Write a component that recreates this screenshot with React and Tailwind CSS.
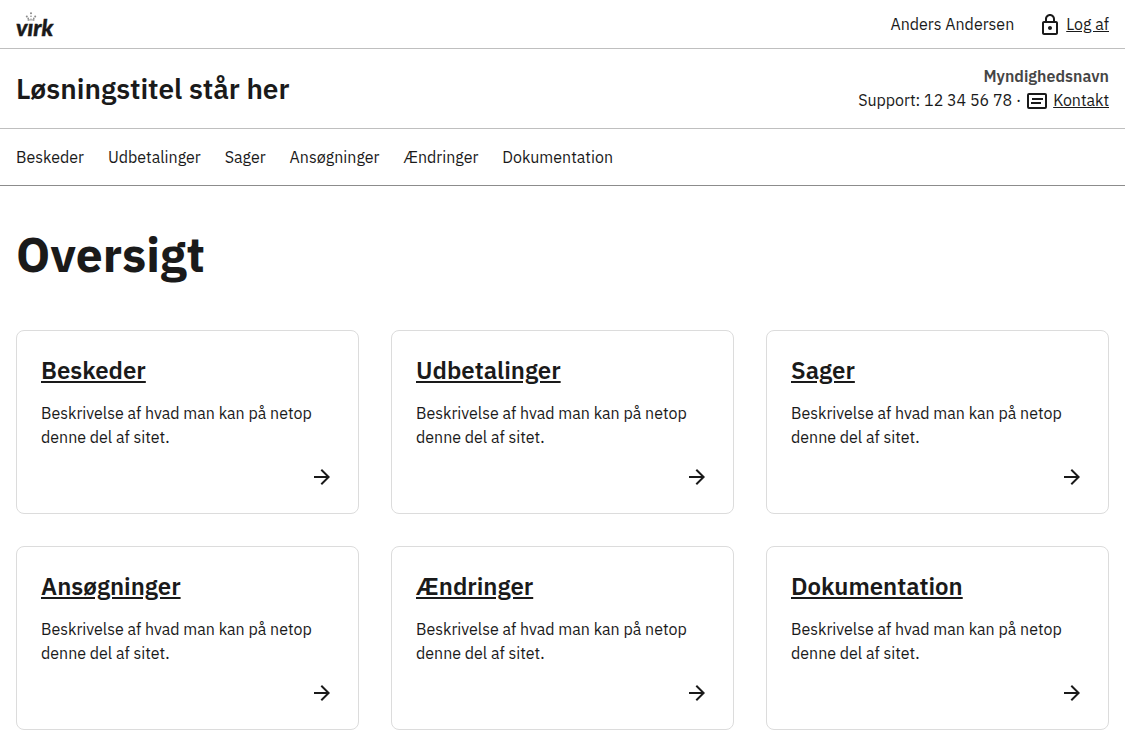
const sections = ["Beskeder", "Udbetalinger", "Sager", "Ansøgninger", "Ændringer", "Dokumentation"];

function LockIcon() {
  return (
    <svg className="size-6 shrink-0" viewBox="0 -1 24 24" fill="currentColor" aria-hidden="true">
      <path d="M18 8h-1V6c0-2.76-2.24-5-5-5S7 3.24 7 6v2H6c-1.1 0-2 .9-2 2v10c0 1.1.9 2 2 2h12c1.1 0 2-.9 2-2V10c0-1.1-.9-2-2-2zM9 6c0-1.66 1.34-3 3-3s3 1.34 3 3v2H9V6zm9 14H6V10h12v10zm-6-3c1.1 0 2-.9 2-2s-.9-2-2-2-2 .9-2 2 .9 2 2 2z" />
    </svg>
  );
}

function ContactIcon() {
  return (
    <svg className="size-6 shrink-0" viewBox="0 -1 24 24" fill="none" stroke="currentColor" strokeWidth="2" aria-hidden="true">
      <rect x="3" y="5" width="18" height="14" rx="1" />
      <path d="M7 10h11M6 14h10" />
    </svg>
  );
}

function ArrowIcon() {
  return (
    <svg className="size-6" viewBox="0 0 24 24" fill="currentColor" aria-hidden="true">
      <path d="M12 4l-1.41 1.41L16.17 11H4v2h12.17l-5.58 5.59L12 20l8-8z" />
    </svg>
  );
}

function Logo() {
  return (
    <svg className="h-8 w-12 overflow-visible" viewBox="0 0 48 32" role="img" aria-label="virk">
      <text
        x="0"
        y="27.6"
        fill="#1a1a1a"
        stroke="#1a1a1a"
        strokeWidth="0.4"
        fontFamily="Lato, sans-serif"
        fontSize="23"
        fontWeight="900"
        fontStyle="italic"
      >
        vırk
      </text>
      <g fill="#8a8a8a">
        <circle cx="15" cy="5.3" r="1" />
        <circle cx="15" cy="8.2" r="0.8" />
        <circle cx="10.8" cy="8.5" r="1" />
        <circle cx="19.2" cy="8.5" r="1" />
        <circle cx="12.2" cy="10.4" r="0.8" />
        <circle cx="17.8" cy="10.4" r="0.8" />
        <rect x="11.6" y="11.2" width="2" height="1.5" />
        <rect x="14.4" y="10.6" width="1.2" height="2" />
        <rect x="16.4" y="11.2" width="2" height="1.5" />
      </g>
    </svg>
  );
}

function Card({ title }) {
  return (
    <a href="#" className="block rounded-lg border border-[#dcdcdc] p-6">
      <h2 className="text-2xl leading-[30px] font-semibold underline">{title}</h2>
      <p className="mt-4">Beskrivelse af hvad man kan på netop denne del af sitet.</p>
      <div className="mt-4 flex justify-end">
        <ArrowIcon />
      </div>
    </a>
  );
}

export default function App() {
  return (
    <div className="bg-white pb-4 font-['IBM_Plex_Sans',Roboto,sans-serif] text-base text-[#1a1a1a]">
      <header>
        <div className="flex items-center justify-between border-b border-[#bfbfbf] px-4 py-2">
          <a href="#">
            <Logo />
          </a>
          <div className="flex items-center gap-6">
            <span>Anders Andersen</span>
            <a href="#" className="flex items-center gap-1">
              <LockIcon />
              <span className="underline">Log af</span>
            </a>
          </div>
        </div>
        <div className="flex items-end justify-between border-b border-[#bfbfbf] px-4 pt-[15px] pb-4">
          <a href="#" className="text-[28px] leading-[46px] font-semibold">
            Løsningstitel står her
          </a>
          <div className="flex flex-col items-end">
            <strong className="font-semibold text-[#454545]">Myndighedsnavn</strong>
            <div className="flex items-center gap-1">
              <span>Support: 12 34 56 78 ·</span>
              <a href="#" className="flex items-center gap-1">
                <ContactIcon />
                <span className="underline">Kontakt</span>
              </a>
            </div>
          </div>
        </div>
        <nav className="border-b border-[#8c8c8c] px-4 py-4">
          <ul className="flex gap-6">
            {sections.map((name) => (
              <li key={name}>
                <a href="#">{name}</a>
              </li>
            ))}
          </ul>
        </nav>
      </header>
      <main className="px-4 pt-10">
        <h1 className="text-5xl leading-14 font-bold">Oversigt</h1>
        <div className="mt-12 grid grid-cols-3 gap-8">
          {sections.map((name) => (
            <Card key={name} title={name} />
          ))}
        </div>
      </main>
    </div>
  );
}
